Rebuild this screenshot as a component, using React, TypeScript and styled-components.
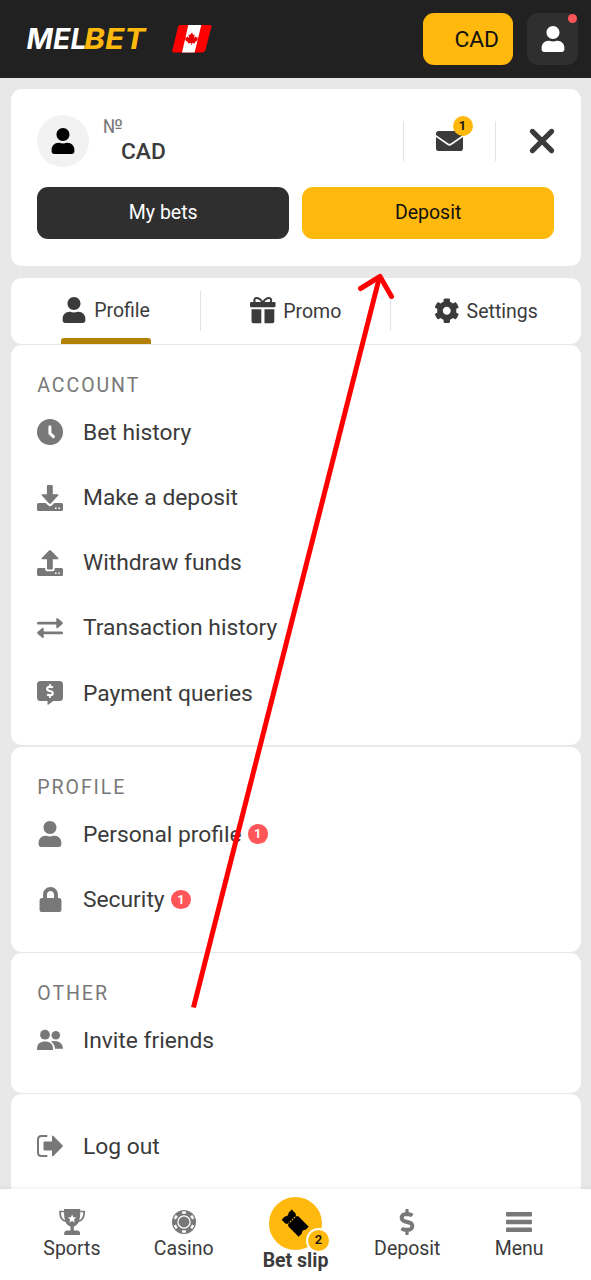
import React from "react";
import styled, { createGlobalStyle } from "styled-components";
import { FaUser, FaLock, FaCog, FaDollarSign } from "react-icons/fa";

const Global = createGlobalStyle`
  * { box-sizing: border-box; }
  html, body { margin: 0; padding: 0; }
  body { background: #e8e8e8; font-family: Roboto, "Liberation Sans", sans-serif; color: #3b3b3b; overflow: hidden; }
  svg { display: block; flex: none; overflow: visible; }
`;

const Screen = styled.div`
  position: relative;
  display: flex;
  flex-direction: column;
  width: 591px;
  height: 1280px;
  overflow: hidden;
`;

const Header = styled.header`
  display: flex;
  align-items: center;
  flex: none;
  height: 78px;
  padding: 0 13px 0 27px;
  background: #212121;
`;

const Logo = styled.div`
  width: 145.3px;
  height: 24px;
`;

const LogoText = styled.text`
  font-family: Inter, sans-serif;
  font-weight: 750;
  font-style: italic;
  font-size: 29px;
`;

const Spacer = styled.div`
  flex: 1;
`;

const Balance = styled.button`
  display: flex;
  align-items: center;
  justify-content: flex-end;
  width: 90px;
  height: 52px;
  margin-right: 14px;
  padding: 0 14px 0 0;
  border: 0;
  border-radius: 11px;
  background: #ffb80c;
  color: #111;
  font: 400 22.75px Roboto, sans-serif;
`;

const UserButton = styled.button`
  position: relative;
  display: flex;
  align-items: center;
  justify-content: center;
  width: 51px;
  height: 52px;
  border: 0;
  padding: 0;
  border-radius: 11px;
  background: #2f2f2f;
  color: #fff;
`;

const AlertDot = styled.span`
  position: absolute;
  top: 0.5px;
  right: 1px;
  width: 9px;
  height: 9px;
  border-radius: 50%;
  background: #ff5659;
`;

const Content = styled.main`
  display: flex;
  flex-direction: column;
  flex: 1;
  min-height: 0;
  overflow: hidden;
  padding: 11px 10.5px 0 11px;
`;

const AccountCard = styled.section`
  flex: none;
  height: 176.5px;
  padding: 26px 26.5px 26px 26.3px;
  border-radius: 11px;
  background: #fff;
`;

const AccountTop = styled.div`
  display: flex;
  align-items: center;
  height: 52px;
  margin-right: -0.5px;
`;

const Avatar = styled.div`
  display: flex;
  align-items: center;
  justify-content: center;
  width: 52px;
  height: 52px;
  border-radius: 50%;
  background: #f2f2f2;
  color: #000;
`;

const AccountInfo = styled.div`
  flex: 1;
  padding: 0 0 2px 13.7px;
`;

const AccountNumber = styled.div`
  font-size: 19.5px;
  line-height: 22px;
  color: #787878;
`;

const Currency = styled.div`
  padding: 1px 0 0 18px;
  font-size: 22.75px;
  font-weight: 500;
  line-height: 26px;
`;

const Rule = styled.div`
  flex: none;
  width: 1px;
  height: 40px;
  background: #e3e3e3;
`;

const MailSlot = styled.div`
  position: relative;
  display: flex;
  justify-content: center;
  width: 91px;
`;

const MailBadge = styled.span`
  position: absolute;
  left: 49px;
  top: -15px;
  width: 20px;
  height: 20px;
  border-radius: 50%;
  background: #ffb80c;
  color: #111;
  font: 600 13px/20px Roboto, sans-serif;
  text-align: center;
`;

const CloseSlot = styled.div`
  display: flex;
  justify-content: flex-end;
  width: 59px;
`;

const Actions = styled.div`
  display: flex;
  gap: 13px;
  margin-top: 19.5px;
`;

const Action = styled.button<{ $primary?: boolean }>`
  flex: 1;
  height: 52.5px;
  padding: 0;
  border: 0;
  border-radius: 11px;
  background: ${(p) => (p.$primary ? "#ffb80c" : "#2f2f2f")};
  color: ${(p) => (p.$primary ? "#111" : "#fff")};
  font: 400 19.5px Roboto, sans-serif;
`;

const Tabs = styled.nav`
  display: flex;
  align-items: center;
  flex: none;
  height: 66px;
  margin-top: 12.5px;
  border-radius: 11px;
  background: #fff;
`;

const Tab = styled.div`
  display: flex;
  justify-content: center;
  flex: 1;
  height: 66px;
`;

const TabLabel = styled.div`
  display: flex;
  flex-direction: column;
  height: 66px;
`;

const TabFace = styled.div`
  display: flex;
  align-items: center;
  gap: 7px;
  height: 60px;
  padding-top: 5px;
  font-size: 19.5px;
`;

const TabText = styled.span`
  padding-top: 1px;
`;

const TabMarker = styled.div`
  height: 6.5px;
  margin-right: -1px;
  border-radius: 3px 3px 0 0;
  background: #b38205;
`;

const Section = styled.section<{ $height: number; $gap: number; $top?: number }>`
  flex: none;
  height: ${(p) => p.$height}px;
  margin-top: ${(p) => p.$gap}px;
  padding: ${(p) => p.$top ?? 26}px 26px 0 26.3px;
  border-radius: 11px;
  background: #fff;
`;

const SectionTitle = styled.h2`
  margin: 0;
  height: 28.5px;
  font-size: 19.5px;
  font-weight: 400;
  line-height: 29px;
  letter-spacing: 1.95px;
  color: #787878;
`;

const Row = styled.div`
  display: flex;
  align-items: center;
  height: 65.2px;
  font-size: 22.8px;
`;

const RowIcon = styled.span`
  display: flex;
  justify-content: center;
  width: 26px;
  margin-right: 19.7px;
  color: #787878;
`;

const RowBadge = styled.span`
  width: 19.5px;
  height: 19.5px;
  margin-left: 6.5px;
  border-radius: 50%;
  background: #ff5659;
  color: #fff;
  font-size: 13px;
  font-weight: 600;
  line-height: 19px;
  text-align: center;
`;

const BottomBar = styled.nav`
  position: relative;
  display: flex;
  flex: none;
  height: 91px;
  padding: 0 16px;
  background: #fff;
  box-shadow: 0 -1px 4px rgba(0, 0, 0, 0.08);
`;

const BarItem = styled.div<{ $main?: boolean }>`
  display: flex;
  flex-direction: column;
  align-items: center;
  flex: 1;
  padding-top: ${(p) => (p.$main ? 8 : 19)}px;
  font-size: 19.5px;
  font-weight: ${(p) => (p.$main ? 700 : 400)};
  line-height: 26px;
`;

const BarIcon = styled.span`
  display: flex;
  align-items: center;
  height: 28px;
  color: #787878;
`;

const SlipCircle = styled.span`
  position: relative;
  display: flex;
  align-items: center;
  justify-content: center;
  width: 53px;
  height: 53px;
  margin-bottom: -2px;
  border-radius: 50%;
  background: #ffb80c;
`;

const SlipBadge = styled.span`
  position: absolute;
  left: 37px;
  top: 31px;
  width: 25px;
  height: 25px;
  border: 2.5px solid #fff;
  border-radius: 50%;
  background: #ffb80c;
  color: #111;
  font-size: 13px;
  font-weight: 600;
  line-height: 20px;
  text-align: center;
`;

const ArrowOverlay = styled.svg`
  position: absolute;
  left: 0;
  top: 0;
  pointer-events: none;
`;

const Flag = () => (
  <svg width="40" height="28" viewBox="0 0 40 28">
    <path d="M8.500 0H38Q40 0 39.400 2L33.400 25Q32.600 27.500 30 27.500H1.500Q-.3 27.500.3 25.500L6 2Q6.500 0 8.500 0Z" fill="#f00" />
    <path d="M16.300 0H29.300L22.600 27.500H10Z" fill="#fff" />
    <path d="M20 7.500l1.300 2.600 1.300-.7-.6 3.600 1.900-1.700.4 1.100 1.700-.2-.7 2 .8.500-3.400 2.700.2 1-3.100-.4v2h-.7v-2l-3.100.4.2-1-3.400-2.700.8-.5-.6-2 1.700.2.500-1.100 1.800 1.700-.5-3.600 1.300.7z" fill="#e80000" />
  </svg>
);

const Envelope = () => (
  <svg width="27" height="20" viewBox="0 0 27 20" fill="#3b3b3b">
    <path d="M0 2.800Q0 0 2.800 0H24.200Q27 0 27 2.800V4L15 12.200Q13.500 13.200 12 12.200L0 4Z" />
    <path d="M0 6L11.500 14.100Q13.500 15.400 15.500 14.100L27 6V17.200Q27 20 24.200 20H2.800Q0 20 0 17.200Z" />
  </svg>
);

const Close = () => (
  <svg width="26" height="26" viewBox="0 0 26 26" stroke="#3b3b3b" strokeWidth="5.200" strokeLinecap="round">
    <path d="M3.400 3.400L22.600 22.600M22.600 3.400L3.400 22.600" />
  </svg>
);

const Gift = () => (
  <svg width="26" height="27" viewBox="0 0 26 27" fill="#3b3b3b">
    <rect y="5" width="25.500" height="5.300" rx="1.200" />
    <path d="M1.500 12.300H11.300V26.300H3.500Q1.500 26.300 1.500 24.300ZM14.500 12.300H24.300V24.300Q24.300 26.300 22.300 26.300H14.500Z" />
    <path d="M12.700 5.500C10.500 2 8.500 1 6.500 1C4.300 1 3.700 3.500 5 5.500M12.900 5.500C15 2 17 1 19 1C21.200 1 21.800 3.500 20.500 5.500" fill="none" stroke="#3b3b3b" strokeWidth="2" />
  </svg>
);

const Clock = () => (
  <svg width="26" height="26" viewBox="0 0 26 26">
    <circle cx="13" cy="13" r="13" fill="currentColor" />
    <path d="M12.900 7.700V14.300L16.400 17.600" fill="none" stroke="#fff" strokeWidth="3" strokeLinecap="round" strokeLinejoin="round" />
  </svg>
);

const Download = () => (
  <svg width="26" height="26" viewBox="0 0 26 26" fill="currentColor">
    <path d="M10.800 0H14.900Q15.800 0 15.800.9V9.200H20.700Q22.300 9.400 21.200 10.600L13.900 18.400Q13 19.200 12.100 18.400L4.800 10.600Q3.700 9.400 5.300 9.200H9.900V.9Q9.900 0 10.800 0Z" />
    <path d="M1.500 18H8.600L11.200 20.500Q13 22 14.800 20.500L17.400 18H24.500Q26 18 26 19.500V24.500Q26 26 24.500 26H1.500Q0 26 0 24.500V19.500Q0 18 1.500 18Z" />
    <path d="M18 22.400h1.500v1.500h-1.500zM21.300 22.400H22.800v1.500h-1.500z" fill="#fff" />
  </svg>
);

const Upload = () => (
  <svg width="26" height="26" viewBox="0 0 26 26" fill="currentColor">
    <path d="M12.100.4Q13 -.4 13.900.4L21.300 7.900Q22.300 9.100 20.700 9.300H15.800V18.600Q15.800 19.500 14.900 19.500H11Q10 19.500 10 18.600V9.300H5.300Q3.700 9.100 4.700 7.900Z" />
    <path d="M1.500 18H8.200V19.300Q8.200 21.300 10.200 21.300H15.700Q17.700 21.300 17.700 19.300V18H24.500Q26 18 26 19.500V24.500Q26 26 24.500 26H1.500Q0 26 0 24.500V19.500Q0 18 1.500 18Z" />
    <path d="M18 22.600h1.500v1.500h-1.500zM21.300 22.600H22.800v1.500h-1.500z" fill="#fff" />
  </svg>
);

const Transfer = () => (
  <svg width="26" height="20" viewBox="0 0 26 20" fill="currentColor">
    <path d="M1.200 3.800H19.300V1Q19.500-.5 20.800.3L25.500 4.300Q26.400 5.200 25.500 6L20.800 10Q19.500 10.700 19.300 9.400V6.600H1.200Q0 6.500 0 5.200Q0 3.900 1.200 3.800Z" />
    <path d="M24.800 13.500H6.700V10.800Q6.500 9.300 5.200 10.100L.5 14.100Q-.4 15 .5 15.800L5.200 19.800Q6.500 20.500 6.700 19.200V16.300H24.800Q26 16.200 26 15Q26 13.600 24.800 13.500Z" />
  </svg>
);

const Payment = () => (
  <svg width="26" height="24" viewBox="0 0 26 24">
    <path d="M3.500 0H22.500Q26 0 26 3.500V16.500Q26 20 22.500 20H16.200L11.600 23.600Q10.500 24.200 10.500 23V20H3.500Q0 20 0 16.500V3.500Q0 0 3.500 0Z" fill="currentColor" />
    <FaDollarSign x="6" y="3" size={14} color="#fff" />
  </svg>
);

const Friends = () => (
  <svg width="26" height="20" viewBox="0 0 26 20" fill="currentColor">
    <circle cx="8" cy="4.700" r="4.900" />
    <circle cx="18.800" cy="5.200" r="4.300" />
    <path d="M0 20V18.500C0 14 3.500 11.500 8 11.500S16 14 16 18.500V20Z" />
    <path d="M13.500 11.600C20 9.400 26 12.600 26 18.800H18C17.800 15.500 16.500 13 13.500 11.600Z" />
  </svg>
);

const Logout = () => (
  <svg width="26" height="22" viewBox="0 0 26 22">
    <path d="M10.300 1H4.500Q1 1 1 4.500V17.500Q1 21 4.500 21H10.300" fill="none" stroke="currentColor" strokeWidth="2" />
    <path d="M7.500 6.500H15V1.500Q15.200 0 16.400 1L25.500 10.200Q26.200 11 25.500 11.800L16.400 21Q15.200 22 15 20.500V15.500H7.500Q6.500 15.500 6.500 14.500V7.500Q6.500 6.500 7.500 6.500Z" fill="currentColor" />
  </svg>
);

const Trophy = () => (
  <svg width="26" height="26" viewBox="0 0 26 26" fill="currentColor">
    <path d="M5 0H21.300V2C21.300 11.500 19.500 16 14.800 17.500V21.500H19Q21 22 21 24V26H5.200V24Q5.200 22 7.200 21.500H11.500V17.500C6.800 16 5 11.500 5 2Z" />
    <path d="M5 2.500H1Q.7 11.700 8 12.700M21.300 2.500H25.200Q25.500 11.700 18.200 12.700" fill="none" stroke="currentColor" strokeWidth="1.700" />
    <path d="M13.100 5.500l1.200 2.700 3 .3-2.200 2 .6 2.900-2.600-1.500-2.600 1.500.6-2.900-2.200-2 3-.3z" fill="#fff" />
  </svg>
);

const Chip = () => (
  <svg width="24" height="24" viewBox="0 0 24 24">
    <circle cx="12" cy="12" r="12" fill="currentColor" />
    <circle cx="12" cy="12" r="6.100" fill="none" stroke="#fff" strokeWidth="1.300" />
    {[0, 60, 120, 180, 240, 300].map((angle) => (
      <rect key={angle} x="10.100" y="1.300" width="3.800" height="2.400" fill="#fff" transform={`rotate(${angle} 12 12)`} />
    ))}
  </svg>
);

const Ticket = () => (
  <svg width="25" height="25" viewBox="0 0 28 28">
    <g transform="rotate(45 14 14)">
      <path d="M0 6H6.500L8.500 8L10.500 6H27V11Q24 14 27 17V22H10.500L8.500 20L6.500 22H0V17Q3 14 0 11Z" fill="#000" />
      <path d="M8.500 9V19.500" stroke="#ffb80c" strokeWidth="1.200" strokeDasharray="2 1.200" />
    </g>
  </svg>
);

const Bars = () => (
  <svg width="26" height="20" viewBox="0 0 26 20" fill="currentColor">
    <rect width="26" height="4.600" rx="1" />
    <rect y="7.700" width="26" height="4.600" rx="1" />
    <rect y="15.400" width="26" height="4.600" rx="1" />
  </svg>
);

type Item = { icon: React.ReactNode; label: string; badge?: number };

const MenuRow = ({ icon, label, badge }: Item) => (
  <Row>
    <RowIcon>{icon}</RowIcon>
    {label}
    {badge !== undefined && <RowBadge>{badge}</RowBadge>}
  </Row>
);

const TabButton = ({ icon, label, active }: { icon: React.ReactNode; label: string; active?: boolean }) => (
  <Tab>
    <TabLabel>
      <TabFace>
        {icon}
        <TabText>{label}</TabText>
      </TabFace>
      {active && <TabMarker />}
    </TabLabel>
  </Tab>
);

const accountItems: Item[] = [
  { icon: <Clock />, label: "Bet history" },
  { icon: <Download />, label: "Make a deposit" },
  { icon: <Upload />, label: "Withdraw funds" },
  { icon: <Transfer />, label: "Transaction history" },
  { icon: <Payment />, label: "Payment queries" },
];

const profileItems: Item[] = [
  { icon: <FaUser size={26} />, label: "Personal profile", badge: 1 },
  { icon: <FaLock size={25} />, label: "Security", badge: 1 },
];

export default function App() {
  return (
    <Screen>
      <Global />
      <Header>
        <Logo>
          <svg width="121" height="24" viewBox="0 0 121 24">
            <LogoText x="-.5" y="22" textLength="60" lengthAdjust="spacingAndGlyphs" fill="#fff">MEL</LogoText>
            <LogoText x="57" y="22" textLength="61.500" lengthAdjust="spacingAndGlyphs" fill="#ffb80c">BET</LogoText>
          </svg>
        </Logo>
        <Flag />
        <Spacer />
        <Balance>CAD</Balance>
        <UserButton>
          <FaUser size={26} />
          <AlertDot />
        </UserButton>
      </Header>
      <Content>
        <AccountCard>
          <AccountTop>
            <Avatar><FaUser size={26} /></Avatar>
            <AccountInfo>
              <AccountNumber>№</AccountNumber>
              <Currency>CAD</Currency>
            </AccountInfo>
            <Rule />
            <MailSlot>
              <Envelope />
              <MailBadge>1</MailBadge>
            </MailSlot>
            <Rule />
            <CloseSlot><Close /></CloseSlot>
          </AccountTop>
          <Actions>
            <Action>My bets</Action>
            <Action $primary>Deposit</Action>
          </Actions>
        </AccountCard>
        <Tabs>
          <TabButton icon={<FaUser size={26} />} label="Profile" active />
          <Rule />
          <TabButton icon={<Gift />} label="Promo" />
          <Rule />
          <TabButton icon={<FaCog size={25.5} />} label="Settings" />
        </Tabs>
        <Section $height={400} $gap={1} $top={26.3}>
          <SectionTitle>ACCOUNT</SectionTitle>
          {accountItems.map((item) => <MenuRow key={item.label} {...item} />)}
        </Section>
        <Section $height={204.5} $gap={2}>
          <SectionTitle>PROFILE</SectionTitle>
          {profileItems.map((item) => <MenuRow key={item.label} {...item} />)}
        </Section>
        <Section $height={139.5} $gap={1.5}>
          <SectionTitle>OTHER</SectionTitle>
          <MenuRow icon={<Friends />} label="Invite friends" />
        </Section>
        <Section $height={140} $gap={1.5} $top={19.5}>
          <MenuRow icon={<Logout />} label="Log out" />
        </Section>
      </Content>
      <BottomBar>
        <BarItem><BarIcon><Trophy /></BarIcon>Sports</BarItem>
        <BarItem><BarIcon><Chip /></BarIcon>Casino</BarItem>
        <BarItem $main>
          <SlipCircle><Ticket /><SlipBadge>2</SlipBadge></SlipCircle>
          Bet slip
        </BarItem>
        <BarItem><BarIcon><FaDollarSign size={26} /></BarIcon>Deposit</BarItem>
        <BarItem><BarIcon><Bars /></BarIcon>Menu</BarItem>
      </BottomBar>
      <ArrowOverlay width="591" height="1280" viewBox="0 0 591 1280" fill="none" stroke="#f00" strokeWidth="5">
        <path d="M193.500 1007.500L379.500 277" />
        <path d="M360.500 288.500L380 276.500L391.500 296.500" strokeLinecap="round" strokeLinejoin="round" />
      </ArrowOverlay>
    </Screen>
  );
}
